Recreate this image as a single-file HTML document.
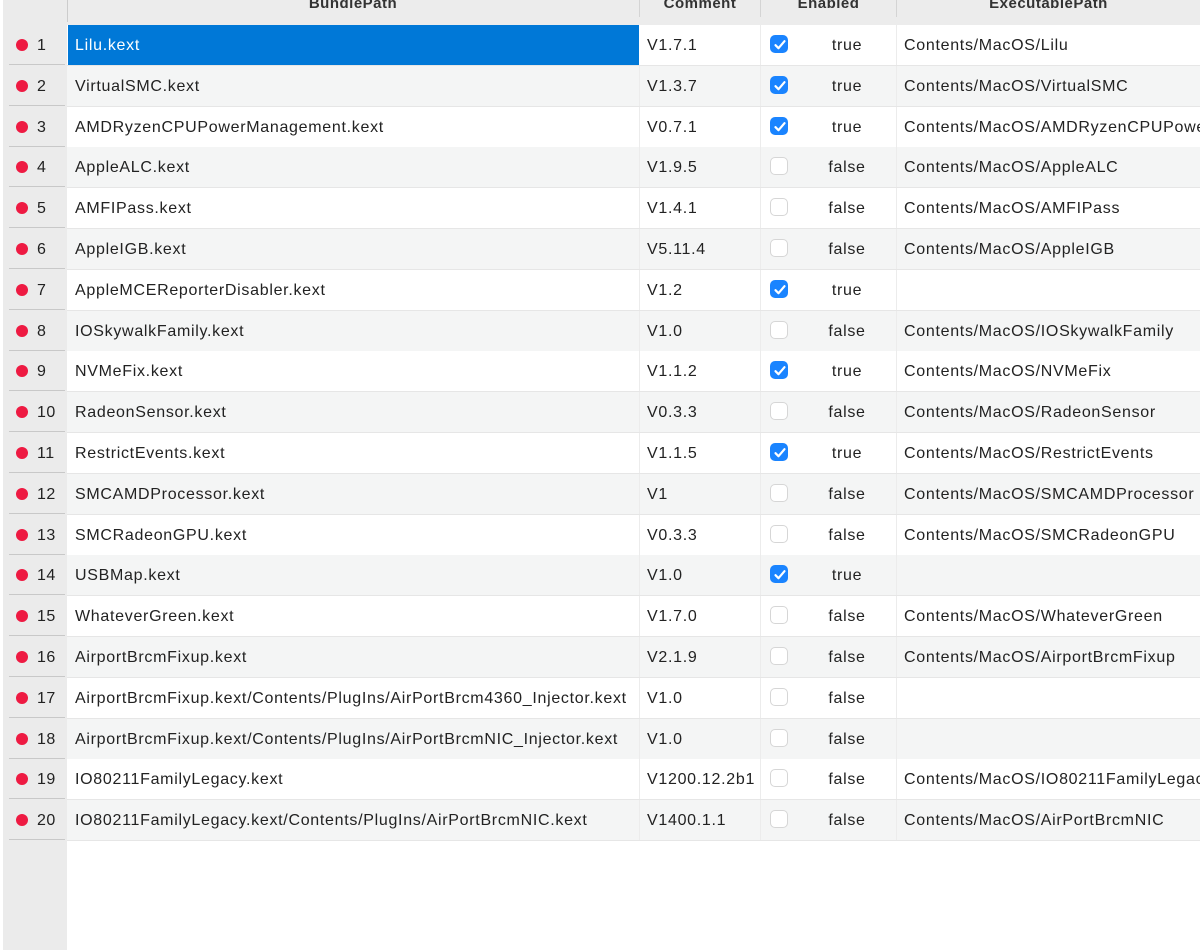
<!DOCTYPE html><html><head><style>
body{margin:0;width:1200px;height:950px;overflow:hidden;background:#fff;font-family:"Liberation Sans",sans-serif;font-size:16px;color:#222;position:relative}
.g{position:absolute;left:3px;top:0;width:64px;height:950px;background:#ebebeb}
.hd{position:absolute;left:67px;top:0;width:1133px;height:25px;background:#ececec;border-bottom:1px solid #ddd;overflow:hidden}
.hd div{position:absolute;top:-5px;font-weight:bold;color:#333;text-align:center;font-size:15px;letter-spacing:0.5px}
.hs{position:absolute;top:0;width:1px;height:22px;background:#d4d4d4}
.r{position:absolute;left:67px;width:1133px;height:40px;border-bottom:1px solid #e6e6e6;overflow:hidden}
.r span{position:absolute;top:12px;white-space:nowrap;letter-spacing:0.7px}
.vs{position:absolute;top:0;width:1px;height:40px;background:#ececec}
.cb{position:absolute;left:703px;top:10px;width:18px;height:18px;border-radius:5px;box-sizing:border-box;border:1px solid #d6d6d6;background:#fff}
.cb.on{background:#1a84ff;border-color:#1a84ff}
.gn{position:absolute;left:3px;width:64px;height:40px}
.gn i{position:absolute;left:13px;top:14px;width:12px;height:12px;border-radius:50%;background:#ee1a42}
.gn b{position:absolute;left:34px;top:12px;font-weight:normal;letter-spacing:0.5px}
.gn u{position:absolute;left:6px;bottom:0;width:56px;height:1px;background:#c8c8c8}
</style></head><body>
<div class="g"></div>
<div class="hd">
<div style="left:0;width:572px">BundlePath</div><div class="hs" style="left:572px"></div>
<div style="left:573px;width:120px">Comment</div><div class="hs" style="left:693px"></div>
<div style="left:694px;width:135px">Enabled</div><div class="hs" style="left:829px"></div>
<div style="left:830px;width:303px">ExecutablePath</div>
</div>
<div style="position:absolute;left:67px;top:0;width:1px;height:22px;background:#ccc"></div>
<div id="rows"></div>
<script>
var d=[["Lilu.kext","V1.7.1",1,"Contents/MacOS/Lilu"],["VirtualSMC.kext","V1.3.7",1,"Contents/MacOS/VirtualSMC"],["AMDRyzenCPUPowerManagement.kext","V0.7.1",1,"Contents/MacOS/AMDRyzenCPUPowerManagement"],["AppleALC.kext","V1.9.5",0,"Contents/MacOS/AppleALC"],["AMFIPass.kext","V1.4.1",0,"Contents/MacOS/AMFIPass"],["AppleIGB.kext","V5.11.4",0,"Contents/MacOS/AppleIGB"],["AppleMCEReporterDisabler.kext","V1.2",1,""],["IOSkywalkFamily.kext","V1.0",0,"Contents/MacOS/IOSkywalkFamily"],["NVMeFix.kext","V1.1.2",1,"Contents/MacOS/NVMeFix"],["RadeonSensor.kext","V0.3.3",0,"Contents/MacOS/RadeonSensor"],["RestrictEvents.kext","V1.1.5",1,"Contents/MacOS/RestrictEvents"],["SMCAMDProcessor.kext","V1",0,"Contents/MacOS/SMCAMDProcessor"],["SMCRadeonGPU.kext","V0.3.3",0,"Contents/MacOS/SMCRadeonGPU"],["USBMap.kext","V1.0",1,""],["WhateverGreen.kext","V1.7.0",0,"Contents/MacOS/WhateverGreen"],["AirportBrcmFixup.kext","V2.1.9",0,"Contents/MacOS/AirportBrcmFixup"],["AirportBrcmFixup.kext/Contents/PlugIns/AirPortBrcm4360_Injector.kext","V1.0",0,""],["AirportBrcmFixup.kext/Contents/PlugIns/AirPortBrcmNIC_Injector.kext","V1.0",0,""],["IO80211FamilyLegacy.kext","V1200.12.2b1",0,"Contents/MacOS/IO80211FamilyLegacy"],["IO80211FamilyLegacy.kext/Contents/PlugIns/AirPortBrcmNIC.kext","V1400.1.1",0,"Contents/MacOS/AirPortBrcmNIC"]];
var h="";
d.forEach(function(r,i){var t=(25+i*40.8).toFixed(1);var bg=i%2?"#f4f5f5":"#fff";
var chk=r[2]?'<div class="cb on"><svg width="18" height="18" viewBox="0 0 18 18"><path d="M4.5 9.2l3 3 6-7" fill="none" stroke="#fff" stroke-width="2.2" stroke-linecap="round" stroke-linejoin="round"/></svg></div>':'<div class="cb"></div>';
h+='<div class="r" style="top:'+t+'px;background:'+bg+'">'+(i==0?'<div style="position:absolute;left:1px;top:0;width:571px;height:41px;background:#0078d7"></div>':'')+
'<span style="left:8px;'+(i==0?'color:#fff':'')+'">'+r[0]+'</span><div class="vs" style="left:572px;'+(i==0?'display:none':'')+'"></div><span style="left:580px">'+r[1]+'</span><div class="vs" style="left:693px"></div>'+chk+'<span style="left:740px;width:80px;text-align:center">'+(r[2]?"true":"false")+'</span><div class="vs" style="left:829px"></div><span style="left:837px">'+r[3]+'</span></div>';
h+='<div class="gn" style="top:'+t+'px"><i></i><b>'+(i+1)+'</b><u></u></div>';});
document.getElementById("rows").innerHTML=h;
</script>
</body></html>
